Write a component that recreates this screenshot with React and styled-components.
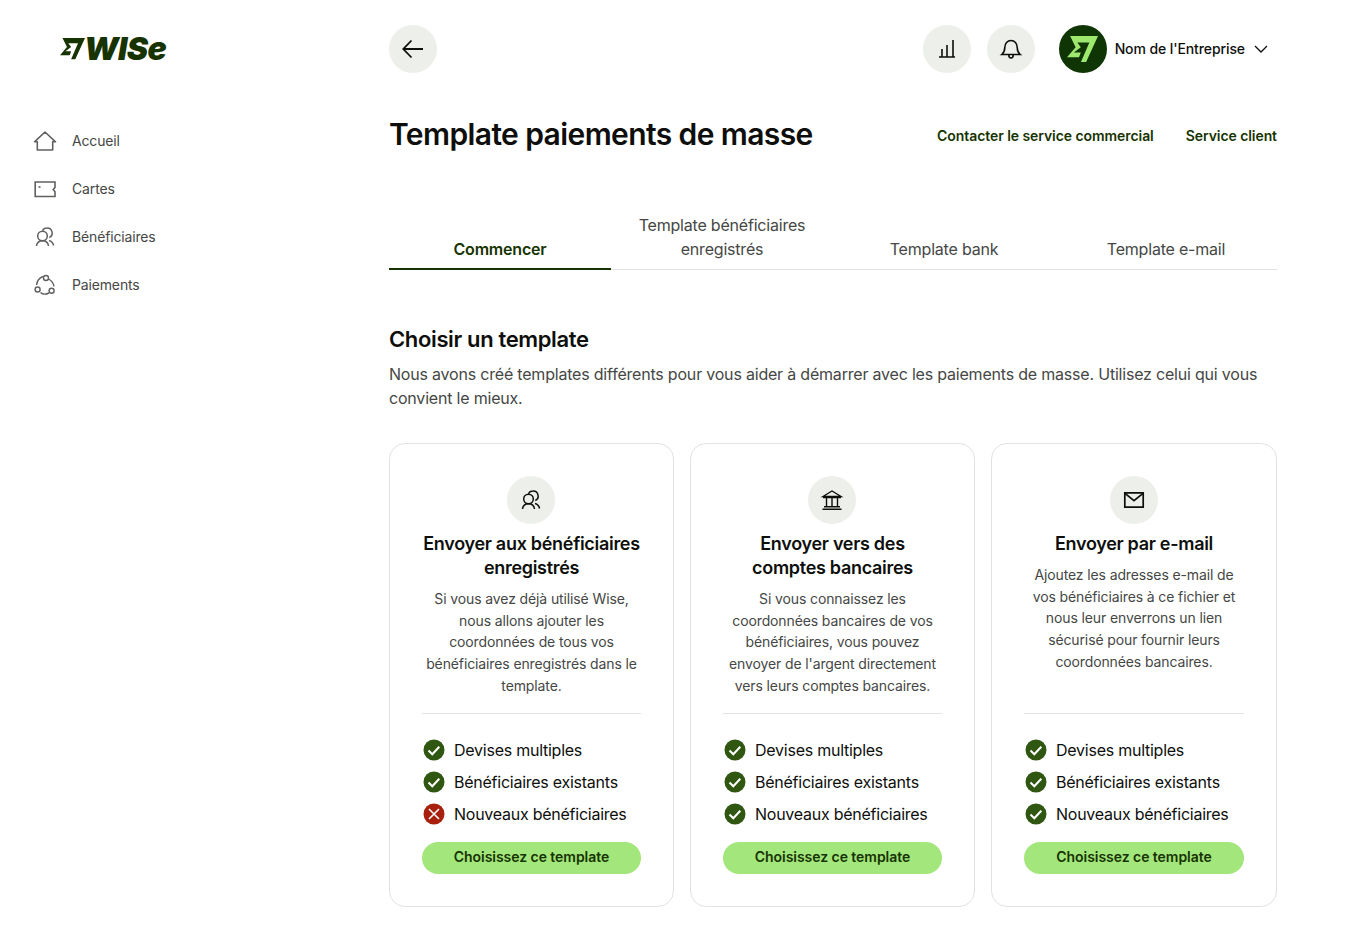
import React from "react";
import styled, { createGlobalStyle } from "styled-components";

const Global = createGlobalStyle`
    html, body {
        margin: 0;
        padding: 0;
        background: #fff;
        font-family: Inter, "Liberation Sans", sans-serif;
        color: #0e0f0c;
    }
    * {
        box-sizing: border-box;
    }
`;

const Page = styled.div`
    display: flex;
    width: 1370px;
    height: 931px;
    overflow: hidden;
`;

const Sidebar = styled.aside`
    width: 389px;
    flex-shrink: 0;
    padding-left: 33px;
`;

const Logo = styled.div`
    display: flex;
    align-items: center;
    height: 117px;
    padding: 0 0 19px 27px;
    color: #163300;
`;

const LogoWord = styled.span`
    font-size: 32px;
    line-height: 30px;
    font-weight: 900;
    font-style: italic;
    letter-spacing: -0.6px;
    margin-left: -1px;
`;

const NavItem = styled.a`
    display: flex;
    align-items: center;
    gap: 15px;
    height: 48px;
    font-size: 14px;
    letter-spacing: -0.15px;
    color: #454745;

    svg {
        color: #5f615e;
    }
`;

const NudgedText = styled.span`
    margin-bottom: 2px;
`;

const Main = styled.main`
    width: 888px;
    flex-shrink: 0;
`;

const Header = styled.header`
    display: flex;
    align-items: center;
    padding-top: 25px;
    height: 73px;
`;

const Circle = styled.button`
    width: 48px;
    height: 48px;
    flex-shrink: 0;
    border: none;
    padding: 0;
    border-radius: 50%;
    background: #edefeb;
    color: #0e0f0c;
    display: flex;
    align-items: center;
    justify-content: center;
`;

const Badge = styled(Circle)`
    margin-right: 1px;
`;

const HeaderRight = styled.div`
    margin-left: auto;
    display: flex;
    align-items: center;
    gap: 16px;
    padding-right: 8px;
`;

const Account = styled.div`
    display: flex;
    align-items: center;
    margin-left: 8px;
    font-size: 14px;
    font-weight: 500;
    letter-spacing: -0.1px;
`;

const Avatar = styled.div`
    width: 48px;
    height: 48px;
    border-radius: 50%;
    background: #0f3505;
    display: flex;
    align-items: center;
    justify-content: center;
    margin-right: 8px;
`;

const Chevron = styled.svg`
    margin-left: 8px;
`;

const TitleRow = styled.div`
    display: flex;
    align-items: center;
    justify-content: space-between;
    margin-top: 41px;
`;

const Title = styled.h1`
    margin: 0;
    font-size: 30px;
    line-height: 40px;
    font-weight: 600;
    letter-spacing: -0.6px;
`;

const Links = styled.div`
    display: flex;
    gap: 32px;
    padding-top: 2px;
`;

const HeadLink = styled.a`
    font-size: 14px;
    font-weight: 600;
    letter-spacing: -0.07px;
    color: #163300;
`;

const Tabs = styled.div`
    display: grid;
    grid-template-columns: repeat(4, 1fr);
    align-items: end;
    margin-top: 59px;
    border-bottom: 1px solid #e2e3e0;
`;

const Tab = styled.div`
    text-align: center;
    font-size: 16px;
    line-height: 24px;
    letter-spacing: -0.2px;
    padding: 0 24px 7px;
    margin-bottom: -1px;
    color: ${(props) => (props.$active ? "#163300" : "#454745")};
    font-weight: ${(props) => (props.$active ? 600 : 400)};
    border-bottom: 2px solid ${(props) => (props.$active ? "#163300" : "transparent")};
`;

const Heading = styled.h2`
    margin: 53px 0 0;
    font-size: 22px;
    line-height: 32px;
    font-weight: 600;
    letter-spacing: -0.36px;
`;

const Intro = styled.p`
    margin: 7px 0 0;
    font-size: 16px;
    line-height: 24px;
    letter-spacing: -0.2px;
    color: #454745;
`;

const Cards = styled.div`
    display: grid;
    grid-template-columns: 285px 285px 286px;
    gap: 16px;
    margin-top: 33px;
`;

const Card = styled.section`
    height: 464px;
    border: 1px solid #e2e3e0;
    border-radius: 16px;
    padding: 32px;
    display: flex;
    flex-direction: column;
    align-items: center;
    text-align: center;
`;

const CardTitle = styled.h3`
    margin: 8px 0 0;
    font-size: 18px;
    line-height: 24px;
    font-weight: 600;
    letter-spacing: -0.3px;
`;

const CardText = styled.p`
    margin: 8px 0 0;
    flex: 1;
    font-size: 14px;
    line-height: 21.7px;
    letter-spacing: -0.12px;
    color: #454745;
`;

const Features = styled.ul`
    list-style: none;
    width: 100%;
    margin: 0;
    padding: 24px 0 0 1px;
    border-top: 1px solid #e2e3e0;
    display: flex;
    flex-direction: column;
    gap: 8px;
`;

const Feature = styled.li`
    display: flex;
    align-items: center;
    gap: 9px;
    height: 24px;
    font-size: 16px;
    line-height: 24px;
    letter-spacing: -0.25px;
    text-align: left;
`;

const Choose = styled.button`
    width: 100%;
    height: 32px;
    flex-shrink: 0;
    margin-top: 16px;
    padding: 0 0 4px;
    border: none;
    border-radius: 16px;
    background: #a3e67c;
    color: #163300;
    font-family: inherit;
    font-size: 14px;
    font-weight: 600;
    letter-spacing: -0.05px;
`;

const Icon = ({ size = 24, children, ...rest }) => (
    <svg width={size} height={size} viewBox="0 0 24 24" fill="none" stroke="currentColor" strokeWidth="1.5" {...rest}>
        {children}
    </svg>
);

const HomeIcon = () => (
    <Icon strokeLinejoin="round" strokeWidth="1.6">
        <path d="M1.5 12.8 12 3l10.5 9.8h-2.8V21H4.3v-8.2z" />
    </Icon>
);

const CardIcon = () => (
    <Icon strokeWidth="1.6">
        <path d="M2.2 5H22v5.5l-1.8 2 1.8 2.2v4.8H2.2z" />
        <path d="M5.5 10h2" />
    </Icon>
);

const PeopleIcon = () => (
    <Icon strokeWidth="1.5">
        <circle cx="9.5" cy="11" r="4.8" />
        <path d="M3.5 21c.4-3 2.5-5.200 6-5.200s5.600 2.200 6 5.200" />
        <path d="M9.500 5.800c.8-1.700 2.500-2.800 4.500-2.800a5 5 0 0 1 2.300 9.500" />
        <path d="M16 15.600c2.300.6 4 2.300 4.600 4.900" />
    </Icon>
);

const PayIcon = () => (
    <Icon strokeWidth="1.4">
        <circle cx="13" cy="5" r="2.5" />
        <circle cx="4.6" cy="16.500" r="2.5" />
        <circle cx="18.6" cy="17.700" r="2.5" />
        <path d="M10 3.500C6.500 4.800 4 7.500 3.600 12M15.500 6c2.800 1.500 5 4 5.500 7.500M7.500 19.500c2 1.800 5.500 2 8.500.5" />
    </Icon>
);

const BarsIcon = () => (
    <Icon strokeWidth="1.6">
        <path d="M4 20h16M7 19.500V12M12 19.500V8M18 19.500V3" />
    </Icon>
);

const BellIcon = () => (
    <Icon strokeWidth="1.6">
        <path d="M2.800 17.500c1.800-1.500 3-3.500 3-7 0-4 2.600-7 6.200-7s6.200 3 6.200 7c0 3.500 1.200 5.500 3 7z" />
        <path d="M9.800 18c0 2 1 3 2.200 3s2.200-1 2.200-3" />
    </Icon>
);

const BankIcon = () => (
    <Icon strokeWidth="1.4">
        <path d="M3 8.500 12 3l9 5.500z" />
        <path d="M3 9.500h18M6.500 10v9M12 10v9M17.500 10v9M4 18.800h16M2.500 21.300h19" />
    </Icon>
);

const MailIcon = () => (
    <Icon strokeWidth="1.7">
        <path d="M2.800 4.800h18.400v14.400H2.800z" />
        <path d="m3 5.300 9 7.400 9-7.400" />
    </Icon>
);

const Flag = ({ size, color }) => (
    <svg width={size} height={size * 0.85} viewBox="0 0 33 28" fill={color}>
        <path d="M3.300 0H33L20.200 28H14.700L23.800 7H11L14.700 12 7.300 17.500H14.700L12.800 22.700H0L9.200 12z" />
    </svg>
);

const Status = ({ ok }) => (
    <svg width="22" height="22" viewBox="0 0 22 22">
        <circle cx="11" cy="11" r="10.500" fill={ok ? "#2f5711" : "#a8200d"} />
        {ok ? (
            <path d="m5.500 11.500 3.800 3.700 7-7.500" fill="none" stroke="#fff" strokeWidth="2" />
        ) : (
            <path d="m6 6 10 10M16 6 6 16" fill="none" stroke="#fff" strokeWidth="1.600" />
        )}
    </svg>
);

const nav = [
    ["Accueil", HomeIcon],
    ["Cartes", CardIcon],
    ["Bénéficiaires", PeopleIcon],
    ["Paiements", PayIcon],
];

const tabs = ["Commencer", "Template bénéficiaires enregistrés", "Template bank", "Template e-mail"];

const templates = [
    {
        icon: PeopleIcon,
        title: "Envoyer aux bénéficiaires enregistrés",
        text: "Si vous avez déjà utilisé Wise, nous allons ajouter les coordonnées de tous vos bénéficiaires enregistrés dans le template.",
        newOk: false,
    },
    {
        icon: BankIcon,
        title: "Envoyer vers des comptes bancaires",
        text: "Si vous connaissez les coordonnées bancaires de vos bénéficiaires, vous pouvez envoyer de l'argent directement vers leurs comptes bancaires.",
        newOk: true,
    },
    {
        icon: MailIcon,
        title: "Envoyer par e-mail",
        text: "Ajoutez les adresses e-mail de vos bénéficiaires à ce fichier et nous leur enverrons un lien sécurisé pour fournir leurs coordonnées bancaires.",
        newOk: true,
    },
];

const App = () => {
    return (
        <Page>
            <Global />
            <Sidebar>
                <Logo>
                    <Flag size={25} color="#163300" />
                    <LogoWord>WISe</LogoWord>
                </Logo>
                {nav.map(([label, NavIcon]) => (
                    <NavItem key={label}>
                        <NavIcon />
                        <NudgedText>{label}</NudgedText>
                    </NavItem>
                ))}
            </Sidebar>
            <Main>
                <Header>
                    <Circle>
                        <Icon strokeWidth="1.8">
                            <path d="M22 12H2.500M10.500 3.500 2.300 12l8.200 8.500" />
                        </Icon>
                    </Circle>
                    <HeaderRight>
                        <Circle>
                            <BarsIcon />
                        </Circle>
                        <Circle>
                            <BellIcon />
                        </Circle>
                        <Account>
                            <Avatar>
                                <Flag size={31} color="#9fe870" />
                            </Avatar>
                            <NudgedText>Nom de l'Entreprise</NudgedText>
                            <Chevron width="16" height="16" viewBox="0 0 16 16" fill="none" stroke="currentColor" strokeWidth="1.3">
                                <path d="m2 5 6 6 6-6" />
                            </Chevron>
                        </Account>
                    </HeaderRight>
                </Header>
                <TitleRow>
                    <Title>Template paiements de masse</Title>
                    <Links>
                        <HeadLink>Contacter le service commercial</HeadLink>
                        <HeadLink>Service client</HeadLink>
                    </Links>
                </TitleRow>
                <Tabs>
                    {tabs.map((tab, i) => (
                        <Tab key={tab} $active={i === 0}>
                            {tab}
                        </Tab>
                    ))}
                </Tabs>
                <Heading>Choisir un template</Heading>
                <Intro>
                    Nous avons créé templates différents pour vous aider à démarrer avec les paiements de masse. Utilisez
                    celui qui vous convient le mieux.
                </Intro>
                <Cards>
                    {templates.map((t) => (
                        <Card key={t.title}>
                            <Badge as="div">
                                <t.icon />
                            </Badge>
                            <CardTitle>{t.title}</CardTitle>
                            <CardText>{t.text}</CardText>
                            <Features>
                                <Feature>
                                    <Status ok />
                                    Devises multiples
                                </Feature>
                                <Feature>
                                    <Status ok />
                                    Bénéficiaires existants
                                </Feature>
                                <Feature>
                                    <Status ok={t.newOk} />
                                    Nouveaux bénéficiaires
                                </Feature>
                            </Features>
                            <Choose>Choisissez ce template</Choose>
                        </Card>
                    ))}
                </Cards>
            </Main>
        </Page>
    );
};

export default App;
